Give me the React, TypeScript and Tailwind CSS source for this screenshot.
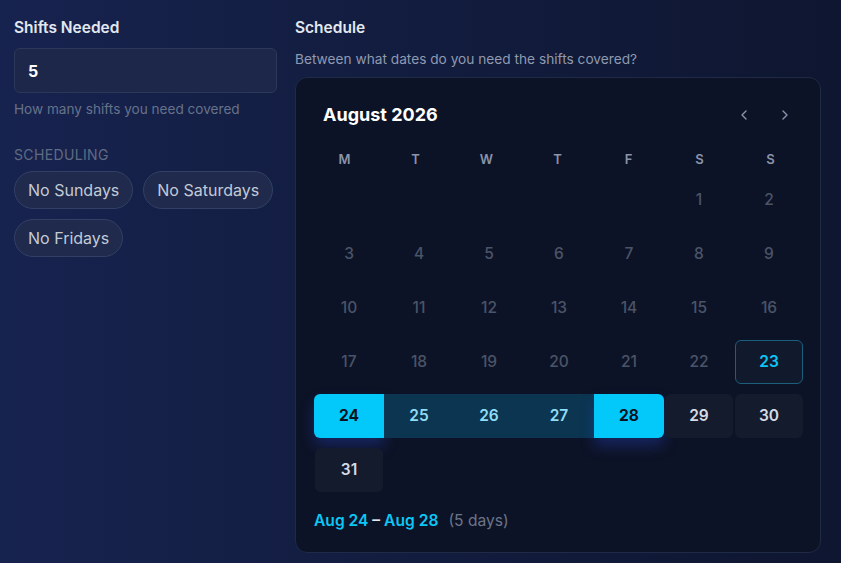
import React from 'react';
import { ChevronLeft, ChevronRight } from 'lucide-react';

const WEEKDAYS = ['M', 'T', 'W', 'T', 'F', 'S', 'S'];

type Day = { n: number };

// August 2026 starts on a Saturday
const days: Day[] = Array.from({ length: 31 }, (_, i) => ({ n: i + 1 }));

const RANGE_START = 24;
const RANGE_END = 28;

const DayCell: React.FC<{ n: number }> = ({ n }) => {
    if (n < 23) {
        return (
            <div className="h-[44px] flex items-center justify-center text-[15.5px] font-medium text-[#4a5468]">
                {n}
            </div>
        );
    }
    if (n === 23) {
        return (
            <div className="h-[44px] mx-px flex items-center justify-center text-[15.5px] font-semibold text-[#0cc6f5] bg-[#111a2d] border border-[#1b5f7c] rounded-md">
                {n}
            </div>
        );
    }
    if (n === RANGE_START) {
        return (
            <div className="h-[44px] flex items-center justify-center text-[15.5px] font-bold text-[#0b1222] bg-[#03c8fa] rounded-l-md shadow-[0_8px_14px_rgba(40,70,200,0.35)]">
                {n}
            </div>
        );
    }
    if (n === RANGE_END) {
        return (
            <div className="h-[44px] flex items-center justify-center text-[15.5px] font-bold text-[#0b1222] bg-[#03c8fa] rounded-r-md shadow-[0_8px_14px_rgba(40,70,200,0.35)]">
                {n}
            </div>
        );
    }
    if (n > RANGE_START && n < RANGE_END) {
        return (
            <div className="h-[44px] flex items-center justify-center text-[15.5px] font-semibold text-[#8fdcf5] bg-[#0b3550]">
                {n}
            </div>
        );
    }
    return (
        <div className="h-[44px] mx-px flex items-center justify-center text-[15.5px] font-semibold text-[#d5dae3] bg-[#131b2d] rounded-md">
            {n}
        </div>
    );
};

export default function App() {
    return (
        <div
            className="w-[841px] h-[563px] overflow-hidden bg-gradient-to-r from-[#17234f] via-[#121c3e] to-[#0e1630] text-[#e2e8f0]"
            style={{ fontFamily: 'Inter, "Noto Sans", sans-serif' }}
        >
            <div className="flex gap-[18px] pl-[14px] pt-[18px]">
                {/* Left column */}
                <div className="w-[263px] flex flex-col">
                    <label className="text-[15.5px] font-semibold text-[#e2e8f0] leading-5">Shifts Needed</label>
                    <div className="mt-[10px] h-[45px] rounded-md bg-[#1c2749] border border-[#2c3859] flex items-center px-[13px]">
                        <span className="text-[16px] font-bold text-white">5</span>
                    </div>
                    <p className="mt-[6px] text-[13.6px] text-[#66728a]">How many shifts you need covered</p>

                    <div className="mt-[28px] text-[14px] tracking-wide text-[#5f6b83] uppercase leading-4">Scheduling</div>
                    <div className="mt-[8px] flex flex-wrap gap-[10px]">
                        {['No Sundays', 'No Saturdays', 'No Fridays'].map(label => (
                            <button
                                key={label}
                                className="h-[38px] px-[13px] rounded-full bg-[#1f2a4c] border border-[#334066] text-[16px] text-[#c3cad6]"
                            >
                                {label}
                            </button>
                        ))}
                    </div>
                </div>

                {/* Right column */}
                <div className="w-[526px] flex flex-col">
                    <h2 className="text-[15.5px] font-semibold text-[#e2e8f0] leading-5">Schedule</h2>
                    <p className="mt-[13px] text-[13.7px] text-[#8f9ab0] leading-4">Between what dates do you need the shifts covered?</p>

                    <div className="mt-[10px] rounded-xl border border-[#1f2a47] bg-[#0d1326] px-[18px] pt-[23px] pb-[19px]">
                        <div className="flex items-center justify-between pl-[9px] pr-[9px]">
                            <span className="text-[18px] font-bold text-white">August 2026</span>
                            <div className="flex items-center gap-[25px] text-[#8a94aa]">
                                <ChevronLeft size={16} strokeWidth={2} />
                                <ChevronRight size={16} strokeWidth={2} />
                            </div>
                        </div>

                        <div className="mt-[22px] -ml-[5px] grid grid-cols-7 w-[497px]">
                            {WEEKDAYS.map((d, i) => (
                                <div key={i} className="text-center text-[13px] font-semibold text-[#8a94aa]">{d}</div>
                            ))}
                        </div>

                        <div className="mt-[8px] grid grid-cols-7 gap-y-[10px] w-[490px]">
                            {Array.from({ length: 5 }).map((_, i) => (
                                <div key={`e${i}`} className="h-[44px]" />
                            ))}
                            {days.map(d => (
                                <DayCell key={d.n} n={d.n} />
                            ))}
                        </div>

                        <div className="mt-[17px] text-[15.6px] leading-6">
                            <span className="font-semibold text-[#0cc6f5]">Aug 24</span>
                            <span className="font-semibold text-[#e2e8f0]"> – </span>
                            <span className="font-semibold text-[#0cc6f5]">Aug 28</span>
                            <span className="ml-[10px] text-[#6b7589]">(5 days)</span>
                        </div>
                    </div>
                </div>
            </div>
        </div>
    );
}
